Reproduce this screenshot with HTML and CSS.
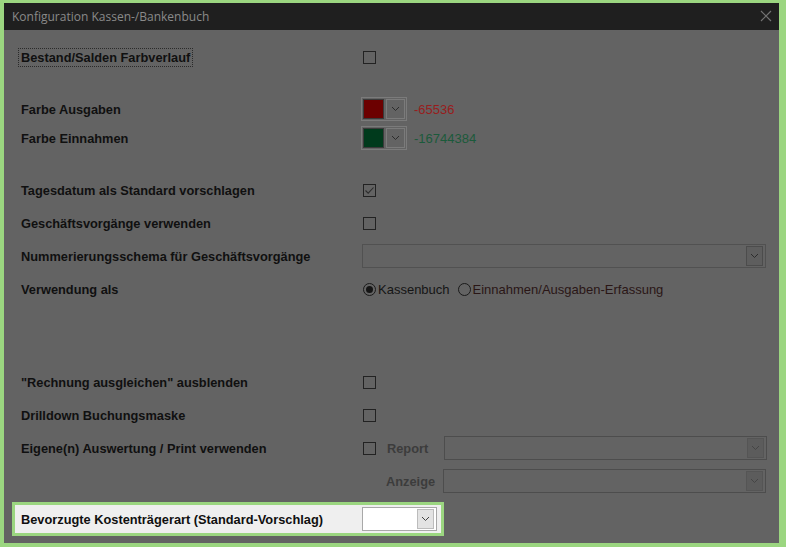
FILE: index.html
```html
<!DOCTYPE html>
<html lang="de">
<head>
    <meta charset="UTF-8">
    <title>Konfiguration Kassen-/Bankenbuch</title>
    <link rel="stylesheet" href="styles.css">
</head>
<body>
    <div class="window">
        <div class="titlebar">
            <span class="title">Konfiguration Kassen-/Bankenbuch</span>
            <svg class="close" width="12" height="12" viewBox="0 0 12 12">
                <path d="M1 1 L11 11 M11 1 L1 11" stroke="#737373" stroke-width="1.2" fill="none"/>
            </svg>
        </div>

        <div class="content">
            <div class="row first">
                <div class="label"><span class="focus">Bestand/Salden Farbverlauf</span></div>
                <div class="ctrl"><span class="check"></span></div>
            </div>

            <div class="row gap-lg">
                <div class="label">Farbe Ausgaben</div>
                <div class="ctrl">
                    <div class="colorpick">
                        <span class="swatch red"></span>
                        <span class="pickbtn"><svg width="9" height="6" viewBox="0 0 9 6"><path d="M1 1 L4.5 4.5 L8 1" stroke="#2c2c2c" fill="none"/></svg></span>
                    </div>
                    <span class="value val-red">-65536</span>
                </div>
            </div>
            <div class="row gap-xs">
                <div class="label">Farbe Einnahmen</div>
                <div class="ctrl">
                    <div class="colorpick">
                        <span class="swatch green"></span>
                        <span class="pickbtn"><svg width="9" height="6" viewBox="0 0 9 6"><path d="M1 1 L4.5 4.5 L8 1" stroke="#2c2c2c" fill="none"/></svg></span>
                    </div>
                    <span class="value val-green">-16744384</span>
                </div>
            </div>

            <div class="row gap-lg">
                <div class="label">Tagesdatum als Standard vorschlagen</div>
                <div class="ctrl">
                    <span class="check">
                        <svg width="11" height="11" viewBox="0 0 11 11"><path d="M1.5 5.5 L4.2 8.2 L9.5 2.5" stroke="#2c2c2c" stroke-width="1.1" fill="none"/></svg>
                    </span>
                </div>
            </div>
            <div class="row">
                <div class="label">Geschäftsvorgänge verwenden</div>
                <div class="ctrl"><span class="check"></span></div>
            </div>
            <div class="row">
                <div class="label">Nummerierungsschema für Geschäftsvorgänge</div>
                <div class="ctrl">
                    <div class="combo wide">
                        <span class="combobtn"><svg width="9" height="6" viewBox="0 0 9 6"><path d="M1 1 L4.5 4.5 L8 1" stroke="#2c2c2c" fill="none"/></svg></span>
                    </div>
                </div>
            </div>
            <div class="row">
                <div class="label">Verwendung als</div>
                <div class="ctrl">
                    <label class="radio"><span class="dot on"></span>Kassenbuch</label>
                    <label class="radio second"><span class="dot"></span><span class="alt">Einnahmen/Ausgaben-Erfassung</span></label>
                </div>
            </div>

            <div class="row gap-xl">
                <div class="label">"Rechnung ausgleichen" ausblenden</div>
                <div class="ctrl"><span class="check"></span></div>
            </div>
            <div class="row">
                <div class="label">Drilldown Buchungsmaske</div>
                <div class="ctrl"><span class="check"></span></div>
            </div>
            <div class="row">
                <div class="label">Eigene(n) Auswertung / Print verwenden</div>
                <div class="ctrl">
                    <span class="check"></span>
                    <span class="sublabel report">Report</span>
                    <div class="combo disabled">
                        <span class="combobtn"><svg width="9" height="6" viewBox="0 0 9 6"><path d="M1 1 L4.5 4.5 L8 1" stroke="#454545" fill="none"/></svg></span>
                    </div>
                </div>
            </div>
            <div class="row">
                <div class="label"></div>
                <div class="ctrl">
                    <span class="sublabel anzeige">Anzeige</span>
                    <div class="combo disabled">
                        <span class="combobtn"><svg width="9" height="6" viewBox="0 0 9 6"><path d="M1 1 L4.5 4.5 L8 1" stroke="#454545" fill="none"/></svg></span>
                    </div>
                </div>
            </div>

            <div class="row spotlight">
                <div class="label">Bevorzugte Kostenträgerart (Standard-Vorschlag)</div>
                <div class="ctrl">
                    <div class="combo light">
                        <span class="combobtn"><svg width="9" height="6" viewBox="0 0 9 6"><path d="M1 1 L4.5 4.5 L8 1" stroke="#444" fill="none"/></svg></span>
                    </div>
                </div>
            </div>
            <div class="row last">
                <div class="label">Buchd Kostenstelle gewählt Kostenträgerart</div>
            </div>
        </div>
    </div>
</body>
</html>
```

FILE: styles.css
```css
html, body {
    margin: 0;
    padding: 0;
}
body {
    width: 786px;
    height: 547px;
    background-color: #9bd680;
    font-family: "Liberation Sans", Arial, sans-serif;
    overflow: hidden;
}
.window {
    margin: 3px 7px 0 4px;
    height: 540px;
    background-color: #636363;
    overflow: hidden;
    display: flex;
    flex-direction: column;
}
.titlebar {
    height: 27px;
    flex: none;
    background-color: #1f1f1f;
    display: flex;
    align-items: center;
    justify-content: space-between;
    padding: 0 7px 0 8px;
}
.title {
    font-family: "Open Sans", "Noto Sans", sans-serif;
    font-size: 12px;
    color: #8a8a8a;
    margin-top: -1px;
}
.close {
    margin-top: -2px;
}
.content {
    padding-left: 17px;
}
.row {
    display: flex;
    align-items: center;
    height: 24px;
    margin-top: 9px;
}
.row.first {
    margin-top: 15px;
}
.row.gap-lg {
    margin-top: 28px;
}
.row.gap-xs {
    margin-top: 5px;
}
.row.gap-xl {
    margin-top: 69px;
}
.label {
    width: 341px;
    flex: none;
    font-size: 12.8px;
    font-weight: bold;
    color: #101010;
}
.focus {
    outline: 1px dotted #2a2a2a;
    outline-offset: 1px;
    padding: 0 1px;
    margin-left: -1px;
}
.ctrl {
    display: flex;
    align-items: center;
    flex: 1;
}
.check {
    width: 11px;
    height: 11px;
    border: 1px solid #222;
    margin-left: 1px;
    display: flex;
    align-items: center;
    justify-content: center;
}
.colorpick {
    display: flex;
    align-items: center;
    gap: 2px;
    border: 1px solid #7b7b7b;
    padding-left: 1px;
    box-sizing: border-box;
    width: 46px;
    height: 24px;
    margin-left: -1px;
}
.swatch {
    width: 19px;
    height: 18px;
    border: 1px solid #3a3a3a;
}
.swatch.red {
    background-color: #6c0000;
}
.swatch.green {
    background-color: #003a1c;
}
.pickbtn {
    width: 17px;
    height: 18px;
    border: 1px solid #7b7b7b;
    display: flex;
    align-items: center;
    justify-content: center;
}
.value {
    font-size: 13px;
    margin-left: 7px;
}
.val-red {
    color: #981d1d;
}
.val-green {
    color: #1b5a3b;
}
.combo {
    height: 24px;
    box-sizing: border-box;
    border: 1px solid #515151;
    display: flex;
    justify-content: flex-end;
    align-items: center;
    padding-right: 2px;
}
.combo.wide {
    width: 404px;
}
.combobtn {
    width: 15px;
    height: 18px;
    border: 1px solid #4c4c4c;
    background-color: #5e5e5e;
    display: flex;
    align-items: center;
    justify-content: center;
}
.combo.disabled {
    width: 323px;
    border-color: #4d4d4d;
}
.combo.disabled .combobtn {
    background-color: #5c5c5c;
    border-color: #555555;
}
.radio {
    display: flex;
    align-items: center;
    font-size: 13px;
    color: #151515;
    margin-left: 1px;
}
.radio.second {
    margin-left: 8px;
}
.dot {
    width: 11px;
    height: 11px;
    border: 1px solid #1a1a1a;
    border-radius: 50%;
    margin-right: 2px;
    display: flex;
    align-items: center;
    justify-content: center;
}
.dot.on::after {
    content: "";
    width: 7px;
    height: 7px;
    border-radius: 50%;
    background-color: #151515;
}
.alt {
    color: #2a1616;
}
.sublabel {
    font-size: 12.8px;
    font-weight: bold;
    color: #3c3c3c;
}
.report {
    margin-left: 11px;
    width: 57px;
}
.anzeige {
    margin-left: 24px;
    width: 57px;
}
.spotlight {
    margin-top: 9px;
    margin-left: -9px;
    width: 432px;
    height: 34px;
    box-sizing: border-box;
    border: 3px solid #9bd680;
    background-color: #efefef;
    padding-left: 6px;
}
.combo.light {
    width: 75px;
    background-color: #ffffff;
    border-color: #a8a8a8;
}
.combo.light .combobtn {
    width: 15px;
    height: 18px;
    background-color: #e3e3e3;
    border-color: #bcbcbc;
}
.row.last {
    margin-top: 3px;
}
```
